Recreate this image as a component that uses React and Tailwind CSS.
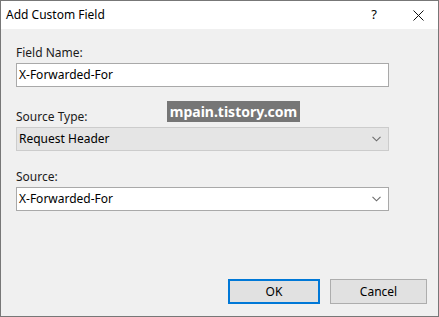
import React from 'react';

const Chevron = () => (
  <svg width="9" height="6" viewBox="0 0 9 6" className="shrink-0">
    <path d="M0.5 0.8 L4.5 4.8 L8.5 0.8" fill="none" stroke="#6b6b6b" strokeWidth="1.1" />
  </svg>
);

const Field = ({ label, value, mt, dropdown, disabled }) => (
  <div className={mt}>
    <div className="h-4 leading-4 text-[12px] text-[#1b1b1b]">{label}</div>
    <div
      className={`mt-[2px] flex h-6 w-[373px] items-center border pl-[2px] pr-[7px] text-[12px] text-black ${
        disabled ? 'border-[#cccccc] bg-[#e5e5e5]' : 'border-[#a9a9a9] bg-white'
      }`}
    >
      <span className="flex-1">{value}</span>
      {dropdown && <Chevron />}
    </div>
  </div>
);

export default function App() {
  return (
    <div
      className="relative flex h-[317px] w-[439px] flex-col border border-[#777777] bg-[#f0f0f0]"
      style={{ fontFamily: '"Noto Sans", "Open Sans", sans-serif' }}
    >
      <div className="flex h-[28px] items-center bg-white pl-[5px] text-[12px] text-black">
        <span className="flex-1">Add Custom Field</span>
        <span className="mr-[4px] w-[40px] text-center text-[13px]">?</span>
        <span className="flex w-[40px] items-center justify-center">
          <svg width="11" height="11" viewBox="0 0 11 11">
            <path d="M0.5 0.5 L10.5 10.5 M10.5 0.5 L0.5 10.5" stroke="#111" strokeWidth="1" />
          </svg>
        </span>
      </div>

      <div className="flex flex-1 flex-col px-[15px] pt-[16px] pb-[12px]">
        <Field label="Field Name:" value="X-Forwarded-For" />
        <Field label="Source Type:" value="Request Header" mt="mt-[22px]" dropdown disabled />
        <Field label="Source:" value="X-Forwarded-For" mt="mt-[18px]" dropdown />

        <div className="flex-1" />

        <div className="mr-[-4px] flex justify-end gap-[10px]">
          <button className="h-[25px] w-[92px] border-2 border-[#0078d7] bg-[#e1e1e1] text-[12px] text-black">
            OK
          </button>
          <button className="h-[25px] w-[97px] border border-[#adadad] bg-[#e1e1e1] text-[12px] text-black">
            Cancel
          </button>
        </div>
      </div>

      <div className="absolute left-[166px] top-[100px] flex h-[21px] w-[133px] items-center justify-center bg-[#767676] text-[14px] font-bold text-white">
        mpain.tistory.com
      </div>
    </div>
  );
}
